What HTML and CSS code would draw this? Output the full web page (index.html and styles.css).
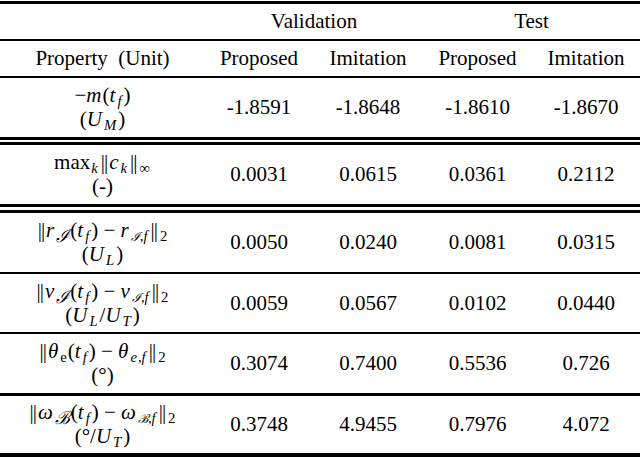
FILE: index.html
```html
<!DOCTYPE html>
<html lang="en">
<head>
<meta charset="utf-8">
<title>Results table</title>
<link rel="stylesheet" href="styles.css">
</head>
<body>
<table class="results">
  <colgroup>
    <col class="c-prop"><col class="c-v1"><col class="c-v2"><col class="c-t1"><col class="c-t2">
  </colgroup>
  <thead>
    <tr class="group">
      <th></th>
      <th colspan="2">Validation</th>
      <th colspan="2">Test</th>
    </tr>
    <tr class="head">
      <th>Property&nbsp; (Unit)</th>
      <th>Proposed</th>
      <th>Imitation</th>
      <th>Proposed</th>
      <th>Imitation</th>
    </tr>
  </thead>
  <tbody>
    <tr class="row dbl">
      <td class="prop"><span class="m">−<i>m</i>(<i>t</i><sub><i>f</i></sub>)</span><span class="m">(<i>U</i><sub><i>M</i></sub>)</span></td>
      <td>-1.8591</td><td>-1.8648</td><td>-1.8610</td><td>-1.8670</td>
    </tr>
    <tr class="row dbl2">
      <td class="prop"><span class="m">max<sub><i>k</i></sub><span class="nb">||</span><i>c</i><sub><i>k</i></sub><span class="nb">||</span><sub>∞</sub></span><span class="m">(-)</span></td>
      <td>0.0031</td><td>0.0615</td><td>0.0361</td><td>0.2112</td>
    </tr>
    <tr class="row single">
      <td class="prop"><span class="m"><span class="nb">||</span><i>r</i><sub class="cal">ℐ</sub>(<i>t</i><sub><i>f</i></sub>) − <i>r</i><sub><span class="cal">ℐ</span>,<i>f</i></sub><span class="nb">||</span><sub>2</sub></span><span class="m">(<i>U</i><sub><i>L</i></sub>)</span></td>
      <td>0.0050</td><td>0.0240</td><td>0.0081</td><td>0.0315</td>
    </tr>
    <tr class="row single short">
      <td class="prop"><span class="m"><span class="nb">||</span><i>v</i><sub class="cal">ℐ</sub>(<i>t</i><sub><i>f</i></sub>) − <i>v</i><sub><span class="cal">ℐ</span>,<i>f</i></sub><span class="nb">||</span><sub>2</sub></span><span class="m">(<i>U</i><sub><i>L</i></sub>/<i>U</i><sub><i>T</i></sub>)</span></td>
      <td>0.0059</td><td>0.0567</td><td>0.0102</td><td>0.0440</td>
    </tr>
    <tr class="row thick">
      <td class="prop"><span class="m"><span class="nb">||</span><i>θ</i><sub>e</sub>(<i>t</i><sub><i>f</i></sub>) − <i>θ</i><sub><i>e</i>,<i>f</i></sub><span class="nb">||</span><sub>2</sub></span><span class="m">(°)</span></td>
      <td>0.3074</td><td>0.7400</td><td>0.5536</td><td>0.726</td>
    </tr>
    <tr class="row last">
      <td class="prop"><span class="m"><span class="nb">||</span><i>ω</i><sub class="cal">ℬ</sub>(<i>t</i><sub><i>f</i></sub>) − <i>ω</i><sub><span class="cal">ℬ</span>,<i>f</i></sub><span class="nb">||</span><sub>2</sub></span><span class="m">(°/<i>U</i><sub><i>T</i></sub>)</span></td>
      <td>0.3748</td><td>4.9455</td><td>0.7976</td><td>4.072</td>
    </tr>
  </tbody>
</table>
</body>
</html>
```

FILE: styles.css
```css
html, body {
  margin: 0;
  padding: 0;
  background: #fff;
}

body {
  padding-top: 1px;
  font-family: "Liberation Serif", "Times New Roman", serif;
  color: #000;
}

.results {
  width: 640px;
  border-collapse: separate;
  border-spacing: 0;
  table-layout: fixed;
  font-family: "Liberation Serif", "Times New Roman", serif;
  font-size: 21px;
}

.c-prop { width: 205px; }
.c-v1 { width: 108px; }
.c-v2 { width: 110px; }
.c-t1 { width: 109px; }
.c-t2 { width: 108px; }

.results th,
.results td {
  padding: 0;
  text-align: center;
  vertical-align: middle;
  font-weight: normal;
  white-space: nowrap;
}

.group th {
  border-top: 3px solid #000;
  border-bottom: 2px solid #000;
  line-height: 35px;
}

.head th {
  border-bottom: 2px solid #000;
  line-height: 35px;
}

.row td {
  padding: 5px 0 6px;
  line-height: 24px;
}

.row.short td {
  padding: 5px 0 5px;
}

.row.last td {
  padding: 4px 0 5px;
  border-bottom: 4px solid #000;
}

.row.dbl td { border-bottom: 8px double #000; }
.row.dbl2 td { border-bottom: 9px double #000; }
.row.single td { border-bottom: 2px solid #000; }
.row.thick td { border-bottom: 3px solid #000; }

.prop .m {
  display: block;
}

.prop i {
  font-style: italic;
  padding-right: 1px;
}

.prop .nb {
  letter-spacing: -1px;
  margin: 0 2px 0 1px;
}

.prop sub {
  font-size: 0.7em;
  line-height: 0;
  vertical-align: -0.3em;
  padding: 0 1px;
}

.prop .cal {
  font-family: "DejaVu Serif", serif;
  font-style: italic;
  font-size: 0.85em;
}
```
